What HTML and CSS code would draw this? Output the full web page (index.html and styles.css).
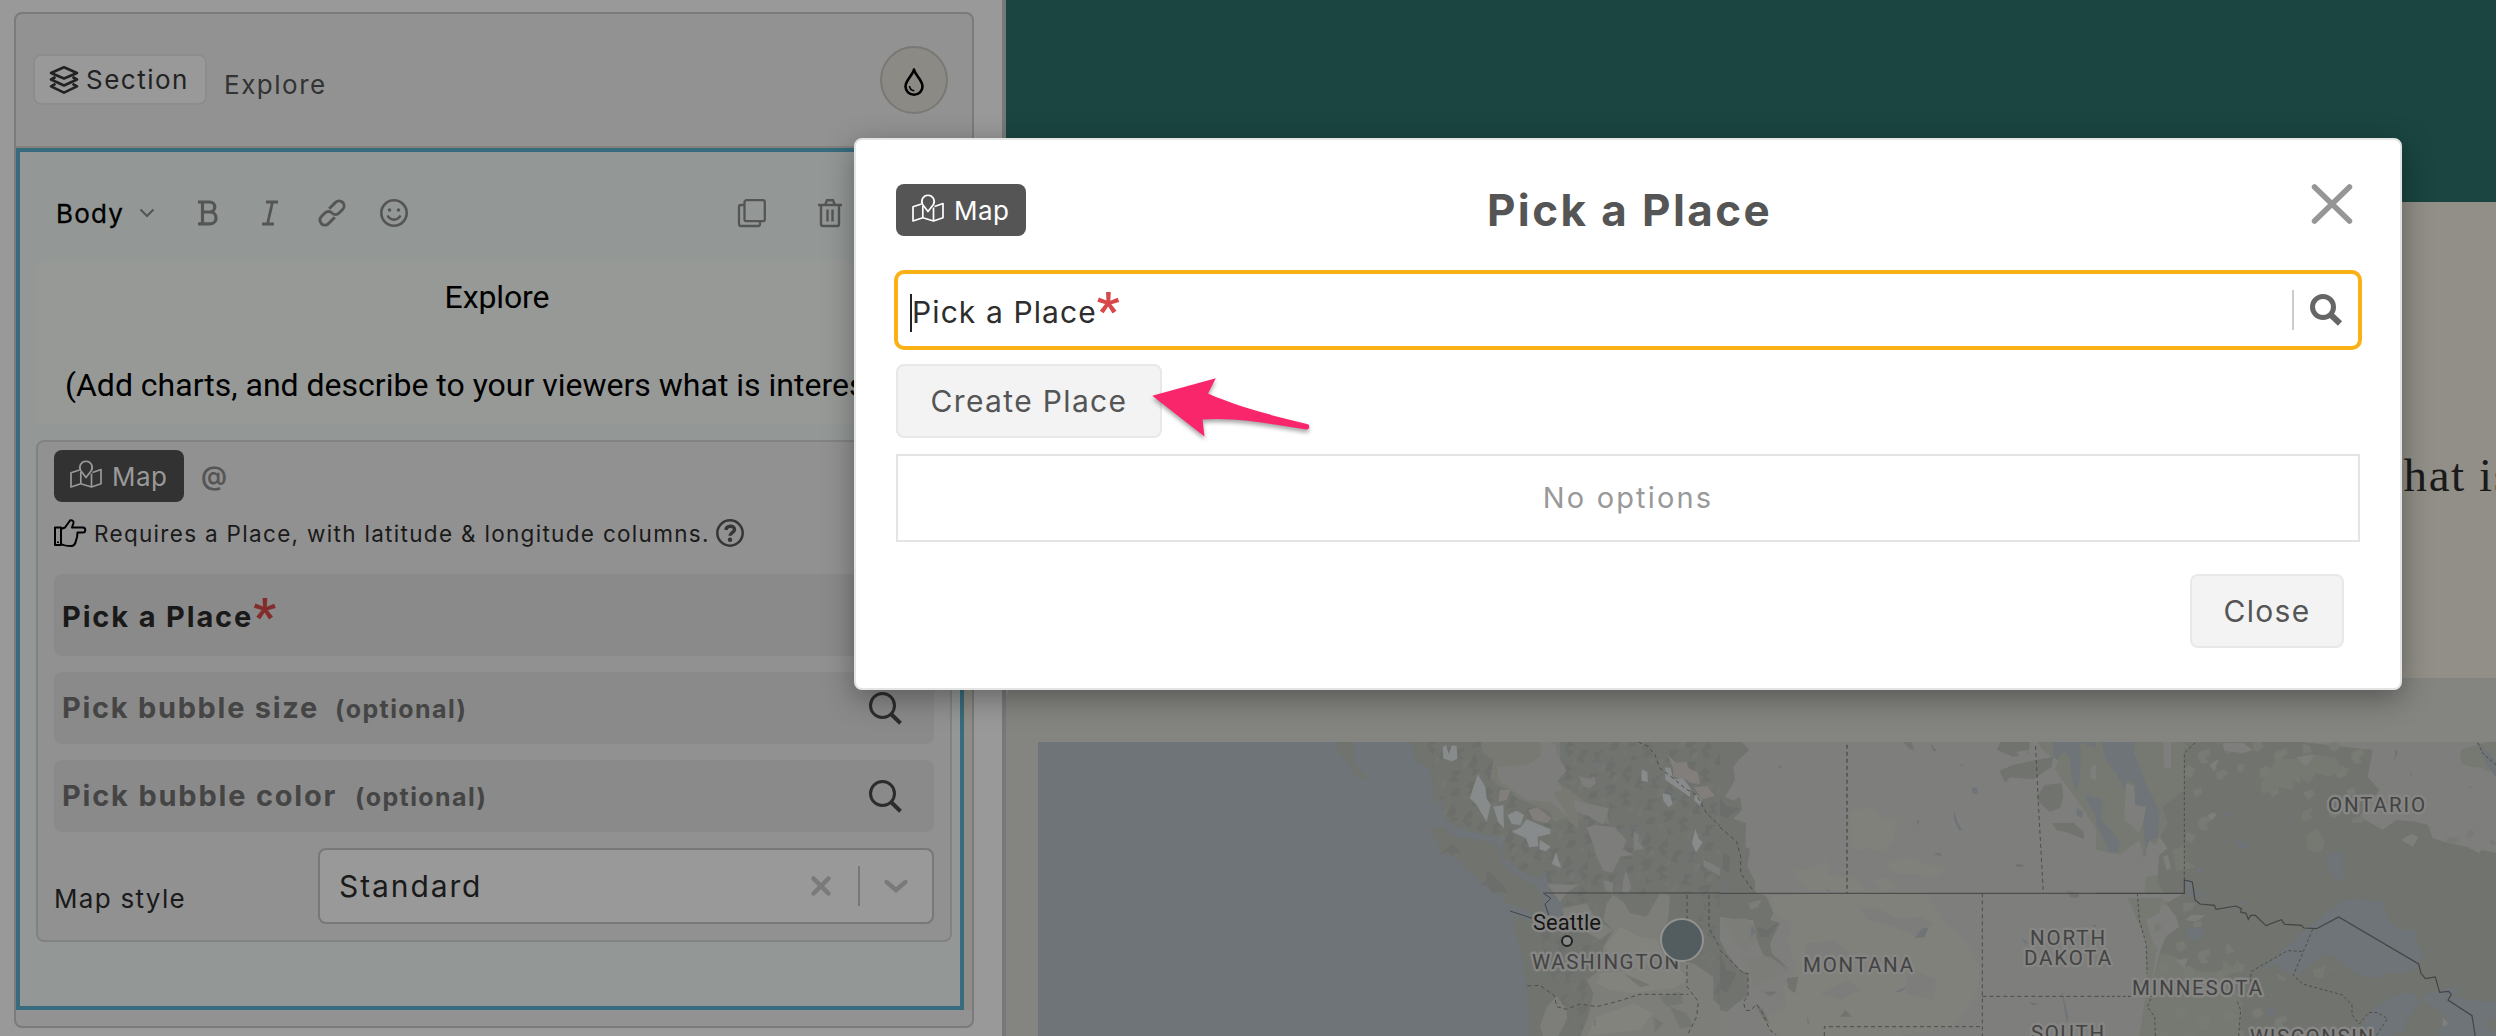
FILE: index.html
```html
<!DOCTYPE html>
<html lang="en">
<head>
<meta charset="utf-8">
<title>Pick a Place</title>
<link rel="stylesheet" href="styles.css">
</head>
<body>
<svg width="0" height="0" class="defs" aria-hidden="true">
  <symbol id="i-map" viewBox="0 0 32 28">
    <g fill="none" stroke="currentColor" stroke-width="1.7" stroke-linejoin="round">
      <path d="M9.500 10 1 12.800V27l9.800-3.300L21.500 27 31 23.800V9.500l-8.500 3"/>
      <path d="M10.800 12v11.700M21.500 13.500V27"/>
      <path d="M16 17.500 10.600 10.500A6.200 6.200 0 1 1 21.400 10.500Z"/>
    </g>
  </symbol>
  <symbol id="i-search" viewBox="0 0 33 33">
    <g fill="none" stroke="currentColor"><ellipse cx="13.500" cy="13.500" rx="12" ry="12" stroke-width="3"/><path d="m22.500 22.500 9 8.700" stroke-width="4"/></g>
  </symbol>
</svg>

<div class="app">
  <main class="editor">
    <section class="section-card">
      <header class="section-head">
        <span class="badge">
          <svg width="28" height="28" viewBox="0 0 28 28" fill="none" stroke="currentColor" stroke-width="2.600" stroke-linejoin="round"><path d="M14 1.300 27 7 14 12.500 1 7Z"/><path d="M5.500 11 1 13.500 14 19.500 27 13.500 22.500 11"/><path d="M5.500 17.800 1 20.400 14 26.600 27 20.400 22.500 17.800"/></svg>
          <span>Section</span>
        </span>
        <span class="section-name">Explore</span>
        <span class="drop">
          <svg width="20" height="28" viewBox="0 0 20 28" fill="none" stroke="#000"><path d="M10 1.500C9 7 1.500 12 1.500 18.500a8.500 8.300 0 0 0 17 0C18.500 12 11 7 10 1.500Z" stroke-width="2.600" stroke-linejoin="round"/><path d="M5.500 18c.3 2.800 2 4.500 4.800 4.700" stroke-width="1.600"/></svg>
        </span>
      </header>
      <div class="block-wrap">
        <div class="block">
          <div class="toolbar">
            <span class="style-name">Body</span>
            <svg class="t-chev" width="16" height="10" viewBox="0 0 16 10" fill="none" stroke="#555" stroke-width="2"><path d="m1.500 1.500 6.500 6.500 6.500-6.500"/></svg>
            <svg class="t-b" width="20" height="26" viewBox="0 0 20 26" fill="none" stroke="#555" stroke-width="3.200"><path d="M0 2h11.500c7 0 7 10 0 10H4M4 12h8c8 0 8 11.800 0 11.800H0M4.500 2v21.500"/></svg>
            <svg class="t-i" width="18" height="26" viewBox="0 0 18 26" fill="none" stroke="#555" stroke-width="2.800"><path d="M5 2h12M1 24h12M11.500 2 6.500 24"/></svg>
            <svg class="t-link" width="26" height="26" viewBox="0 0 26 26" fill="none" stroke="#555" stroke-width="2.900"><g transform="rotate(-45 13 13)"><path d="M14 8.500H23a5 5 0 0 1 5 5 5 5 0 0 1-5 5h-5a5 5 0 0 1-5-5" transform="translate(0 -.5)"/><path d="M12 17.500H3a5 5 0 0 1-5-5 5 5 0 0 1 5-5h5a5 5 0 0 1 5 5" transform="translate(0 .5)"/></g></svg>
            <svg class="t-smile" width="28" height="28" viewBox="0 0 28 28" fill="none" stroke="#555" stroke-width="2.600"><circle cx="14" cy="14" r="12.700"/><path d="M7.500 16.500c3 5.500 10 5.500 13 0"/><circle cx="9.500" cy="11" r="1.800" fill="#555" stroke="none"/><circle cx="18.500" cy="11" r="1.800" fill="#555" stroke="none"/></svg>
            <svg class="t-copy" width="28" height="28" viewBox="0 0 28 28" fill="none" stroke="#555" stroke-width="2.300"><rect x="6.500" y="1.200" width="20.300" height="21" rx="2"/><path d="M6 6H3a2 2 0 0 0-2 2v17a2 2 0 0 0 2 2h17a2 2 0 0 0 2-2v-2.500"/></svg>
            <svg class="t-trash" width="24" height="28" viewBox="0 0 24 28" fill="none" stroke="#555" stroke-width="2.400"><path d="M0 6h24M3 6v19a2 2 0 0 0 2 2h14a2 2 0 0 0 2-2V6M7 6l2-4.800h6L17 6M9.500 10.500v12M14.500 10.500v12"/></svg>
          </div>
          <div class="copy">
            <p class="copy-title">Explore</p>
            <p class="copy-text">(Add charts, and describe to your viewers what is interesting</p>
          </div>
          <div class="chart-card">
            <div class="chart-top">
              <span class="chip chip-dim"><svg width="32" height="28"><use href="#i-map"/></svg><span>Map</span></span>
              <span class="at">@</span>
            </div>
            <div class="hint">
              <svg width="32" height="28" viewBox="0 0 32 28" fill="none" stroke="#000" stroke-width="2" stroke-linejoin="round"><path d="M1 8.500h6V26H1ZM7 10l4-1.500 5-7c1.500-.8 4 0 3.500 2.500L18 8.500h11c3 0 3 5 0 5h-5.500c0 4-.5 6-1.500 8-.5 3-2 5.500-5 5.500-4 0-7-.3-10-2"/><path d="M4 22.500v1.500"/></svg>
              <span class="hint-text">Requires a Place, with latitude &amp; longitude columns.</span>
              <svg width="28" height="28" viewBox="0 0 28 28" fill="none" stroke="#363636"><circle cx="14" cy="14" r="12.700" stroke-width="2.500"/><path d="M10 11c0-5 8.500-5 8.500-.5 0 3.200-4.500 3-4.500 6.300" stroke-width="3.400"/><circle cx="14" cy="20.800" r="2.200" fill="#363636" stroke="none"/></svg>
            </div>
            <div class="pick pick-first"><b>Pick a Place</b><i class="req">*</i></div>
            <div class="pick"><b class="w-size">Pick bubble size</b><small>(optional)</small><svg width="33" height="33"><use href="#i-search"/></svg></div>
            <div class="pick"><b class="w-color">Pick bubble color</b><small>(optional)</small><svg width="33" height="33"><use href="#i-search"/></svg></div>
            <div class="style-row">
              <span class="style-label">Map style</span>
              <span class="select">
                <span class="select-value">Standard</span>
                <svg width="20" height="22" viewBox="0 0 20 22" stroke="#7a7a7a" stroke-width="4.500" stroke-linecap="round"><path d="m2.500 3.500 15 15M17.500 3.500l-15 15"/></svg>
                <span class="select-sep"></span>
                <svg width="24" height="14" viewBox="0 0 24 14" fill="none" stroke="#7a7a7a" stroke-width="4.400" stroke-linecap="round"><path d="m2.500 3 9.500 8 9.500-8"/></svg>
              </span>
            </div>
          </div>
        </div>
      </div>
    </section>
  </main>

  <aside class="preview">
    <div class="hero"></div>
    <div class="story"><p>what is interesting</p></div>
    <div class="map-card">
      <svg class="map" width="1458" height="294" viewBox="1038 742 1458 294">
        <defs>
          <pattern id="ridges" width="190" height="160" patternUnits="userSpaceOnUse" patternTransform="rotate(24)">
            <path fill="#676a67" d="M5 20 30 0 22 30 40 34 12 50 18 34ZM60 10l22 18-6 22 20-4-14 30-8-26-16 6ZM120 4l14 24-20 12 26 2-6 22-24-18 2-20ZM160 30l20-10-8 30 14 10-28 6ZM20 84l28-16-12 28 18 8-32 14 6-18ZM84 92l24-12 4 26-20 22 2-20-16 0ZM140 84l20 8-12 14 24 8-24 20-2-24-18 2ZM46 130l18-10 4 22-22 14ZM110 134l12 8 16-4-20 20Z"/>
            <path fill="#757873" d="M40 44l14-12 4 22-14 14ZM96 52l10 8-8 18-8-10ZM4 120l12-8 4 26-10 8ZM150 60l12 8-10 12ZM80 140l14-8 2 18ZM168 130l16-18-2 30Z"/>
          </pattern>
          <pattern id="patches" width="230" height="200" patternUnits="userSpaceOnUse">
            <path fill="#787a74" d="M10 10l22-6 12 16-18 16-16-8ZM80 36l30-10 4 16-16 10 10 16-22 4-12-20ZM160 12l20 4 8 18-28 8ZM30 90l18-14 20 12-10 22-24 6ZM130 96l26-8 14 14-18 6 2 22-18-6ZM196 70l20 4-6 24-18-6ZM60 150l26-8 2 18-20 12ZM160 158l28-10 10 16-20 16Z"/>
          </pattern>
        </defs>
        <rect x="1038" y="742" width="1458" height="294" fill="#6e7477"/>

        <!-- Pacific coast -->
        <g transform="translate(1320 740) scale(.33333)">
          <path fill="#70736e" d="M272 0 285 60 330 95 342 185 350 195 362 170 372 232 400 258 440 272 520 290 565 285 545 330 556 360 600 390 650 415 675 400 685 445 700 472 725 485 735 530 690 560 580 530 585 580 600 620 612 690 622 760 628 888H1204V0Z"/>
          <path fill="url(#ridges)" opacity=".6" d="M300 0 345 90 372 232 520 290 600 390 675 400 700 472 1204 460V0Z"/>
          <path fill="url(#ridges)" opacity=".4" d="M690 560 640 600 700 720 760 888H800L840 700 830 470H735ZM1120 460H1204V888H1100Z"/>
          <path fill="#70736e" d="M325 268 365 260 410 290 470 300 530 312 548 372 600 410 650 440 672 480 665 510 640 522 600 505 550 482 548 460 520 462 480 420 430 375 390 345 365 340 352 305ZM45 0h58v50l-4 26 26 18 20 22-30-4-26-36-32-38Z"/>
          <path fill="#6b6e6b" d="m400 312-30 20-8 12 18-10 20 14 4-14 20 8ZM500 390l24 20 28 30 10 18-20-4-22 6-18-24-20-2 16-12Z"/>
          <path fill="#787973" d="M480 0H720V60L735 100 712 125 750 150 800 190 862 205 868 255 820 230 775 215V270L740 235 700 245 690 215 640 195 590 175 570 150 540 140 510 115 520 60 490 40Z"/>
          <path fill="#7d7d7b" d="M530 80 620 75 660 50 665 0 705 10 715 50 740 92 712 122 728 148 700 160 750 235 690 185 620 180 540 125ZM775 108 810 116 822 108 828 130 808 146 790 138ZM760 180 800 190 866 205 850 255 805 228 770 215ZM800 262 830 255 885 262 920 300 908 328 942 345 900 350 878 398 850 392 830 350 818 310ZM942 275 958 285 954 302 972 326 940 332ZM680 432 778 434 740 458 720 486 700 458ZM850 420 880 428 878 465 856 450ZM915 380 934 440 925 460 905 455ZM1150 358 1200 385 1200 408 1150 380Z"/>
          <path fill="#7d7e79" d="M880 465 910 485 930 520 980 530 1020 460 1050 465 1045 530 1030 590 1040 650 1120 670 1180 710 1180 780 1204 800V888H780L805 830 820 760 800 720 840 690 850 620 880 570 850 540 860 490ZM728 505 800 490 830 540 880 570 840 600 770 560 730 530ZM680 800 710 768 740 810 742 835 715 888H670L660 860Z"/>
          <path fill="#83837d" d="M900 560 960 590 1010 600 1030 640 960 690 880 660 855 620ZM840 700 960 690 1080 690 1110 720 1060 745 930 760 870 750 830 730ZM830 830 940 790 1000 820 960 870 800 888Z"/>
          <path fill="#747771" d="M1020 770 1080 755 1090 790 1040 800ZM1050 800 1100 820 1120 860 1080 865ZM1000 830 1030 850 1005 878ZM910 700 990 735 960 742Z"/>
          <path fill="#888b8b" d="M368 22 378 14 386 42 396 16 410 18 412 56 396 64 370 56ZM474 104 496 140 500 175 512 195 500 245 486 222 470 195 450 175 460 140ZM520 200 550 195 552 265 534 245ZM562 225 590 212 612 225 602 255 575 252ZM575 275 602 262 620 238 660 255 692 268 690 282 652 290 655 318 628 322 618 295ZM660 300 692 320 678 334 658 328ZM708 336 716 362 724 384 696 372ZM1028 160 1050 165 1058 192 1046 202 1030 182ZM965 88 982 96 984 126 964 122ZM1035 82 1052 84 1060 118 1088 114 1112 145 1110 172 1080 150 1036 120ZM1126 266 1136 296 1148 306 1128 338 1116 310ZM1126 160 1145 178 1140 198 1122 180Z"/>
          <path fill="#817e7b" d="M1042 44 1070 68 1100 66 1106 84 1134 98 1140 132 1112 130 1096 118 1060 110 1058 80ZM1122 142 1162 138 1184 168 1146 178ZM540 150 572 148 560 180 535 185ZM625 210 652 202 695 235 680 250 640 240Z"/>
          <g fill="none" stroke="#6e7477" stroke-width="4"><path d="M820 75 850 72 880 60M1000 110 1040 150 1085 175M890 275 950 262 970 240M1110 330 1112 400 1120 430M720 15 732 60M760 380 780 415M920 380 910 410M826 840 824 856"/></g>
          <g fill="none" stroke="#444" stroke-width="3"><path d="M670 459H1204M570 513 640 536M670 460 693 475 675 492 686 524"/></g>
          <g fill="none" stroke="#4c4d4b" stroke-width="3" stroke-dasharray="12 9"><path d="M955 6 985 20 1005 45 1020 85 1060 115 1095 145 1130 165 1160 220 1204 262M1101 465V740L1135 785 1130 830 1104 882M1167 465V565L1204 630M622 738 660 736 704 768 710 800 740 808 780 792 830 800 890 785 960 763H1105"/></g>
        </g>

        <!-- Prairies -->
        <g transform="translate(1720 740) scale(.33333)">
          <path fill="#7e7e7c" d="M0 0H1202V888H0Z"/>
          <path fill="#80817b" d="M160 470 250 462H620L665 540 700 570 740 610 780 680 770 760 700 860 540 888H180L120 840 200 800 190 740 230 690 205 600 215 550 160 520ZM390 215 450 200 490 240 530 240 520 300 495 335 440 325 400 335ZM495 375 560 348 620 372 680 385 655 412 580 400 530 405ZM225 390 280 385 320 355 325 405 400 412 440 455H280L235 430ZM460 420 500 410 530 440 490 456Z"/>
          <path fill="#7d7e7b" d="M420 500 470 505 530 535 600 530 640 552 590 590 520 560 440 540ZM260 610 340 600 390 640 330 700 250 690ZM560 680 650 720 640 780 560 760ZM380 720 420 750 360 780 300 760Z"/>
          <path fill="#70736e" d="M0 0H60L88 30 60 55 40 80 45 120 15 170 40 182 60 170 66 210 40 236 78 250 76 320 90 328 82 380 105 425 104 455 140 470 160 520 150 540 180 548 150 610 155 640 205 685 160 665 130 645 110 600 100 540 60 540 0 530Z"/>
          <path fill="#70736e" d="M0 600 20 640 60 690 85 700 80 770 50 790 20 815 0 810ZM120 690 145 700 130 725 112 720ZM130 755 175 755 150 768ZM200 715 235 710 225 760 205 745ZM105 790 130 810 150 852 130 838ZM360 830 376 810 396 830ZM550 6H575L582 30 568 26ZM632 10 650 32 640 34Z"/>
          <path fill="#6a6d6a" d="M0 170 20 200 60 205 20 235 0 225ZM10 340 30 350 26 400 8 385ZM110 560 140 570 176 548 145 590 120 590ZM0 640 20 690 50 700 20 760 0 745Z"/>
          <path fill="#7c7d79" d="M85 490 125 478 115 500 92 510ZM10 540 80 535 105 570 110 600 80 640 50 610ZM60 650 150 650 205 690 150 720 100 740 90 690Z"/>
          <path fill="#70736e" d="M842 6H930L925 42 880 50 830 30ZM838 92 880 75 950 60 1000 50 995 80 940 118 870 112 856 128ZM950 170 975 135 1025 130 1030 170 1020 205 990 215 960 190ZM995 250 1060 248 1090 275 1092 298 1050 280 1010 270ZM885 372 912 374 908 382 890 380ZM1038 454 1078 458 1074 474 1050 470Z"/>
          <path fill="#767972" d="M950 0H1204V345L1170 340 1145 320 1130 270 1095 215 1060 165 1030 125 1005 90 1015 60 980 40 960 20Z"/>
          <path fill="#6e7477" d="M1000 6H1204V150L1180 110 1150 60 1125 22 1080 8 1082 60 1078 120 1070 155 1056 120 1050 50 1030 35 1010 60 1000 40ZM1095 165 1142 178 1145 225 1165 262 1190 275 1200 330 1170 335 1140 280 1135 240 1110 200ZM1070 205 1090 215 1086 235 1070 225ZM755 145 770 142 774 158 760 162ZM702 210 712 245 728 272 716 270 702 240ZM590 242 592 255 584 272 600 240ZM640 342 660 338 666 350ZM175 75 186 80 178 86ZM720 72 729 74 726 82ZM605 566 626 562 614 592 584 594ZM96 555 106 575 92 594ZM520 758 562 738 545 754ZM262 826 268 852 262 850ZM925 786 960 792 940 796ZM1024 748 1030 768 1045 830 1040 850 1034 810ZM905 594 918 604 926 612 914 608ZM315 446 340 456 322 452ZM1116 552 1134 558 1124 562ZM5 400 25 450 20 470 8 420Z"/>
          <path fill="#7e7e7c" d="M1112 80 1130 72 1152 105 1140 124 1112 115ZM888 36 925 30 918 50 900 48Z"/>
          <path fill="none" stroke="#444" stroke-width="3" d="M0 460H1204"/>
          <g fill="none" stroke="#4c4d4b" stroke-width="3" stroke-dasharray="12 9"><path stroke-width="4" d="M381 14V460"/><path d="M947 18 955 190 970 460M787 460V888M787 769H1204M313 888V860H787M0 262 50 305 62 350V400L104 458M0 630 70 700H84V770L70 785 76 810 90 812 110 793 125 815 150 870 168 884"/></g>
        </g>

        <!-- Great Lakes -->
        <g transform="translate(2096 740) scale(.33333)">
          <path fill="#7e7e7c" d="M0 0H1204V888H0Z"/>
          <path fill="#767972" d="M0 0H300V420L190 460H145L150 410 180 390 190 330 160 300 145 350 130 300 70 345 0 330ZM95 475H200L190 520 150 540 180 640 170 710 200 760 160 888H130L150 760 150 600ZM190 640 300 630 480 690 500 760 560 800 540 888H160L190 790 170 720Z"/>
          <path fill="#70736e" d="M265 0H560L830 30 815 110 850 150 820 190 790 230 860 270 900 240 960 245 995 255 1010 295 1060 310 1204 340V888H430L440 790 380 700 280 690 240 650 190 640 210 590 250 560 240 530 210 490 265 460H205L185 430 190 300 215 250 200 200 265 150Z"/>
          <path fill="url(#patches)" d="M266 0H830L815 110 840 180 800 250 640 240 500 170 420 110 360 120 320 220 380 260 330 330 270 300Z"/>
          <path fill="url(#patches)" d="M190 480 300 490 420 640 560 800 620 888H190L240 800 150 700ZM1010 220 1080 230 1204 310V345L1060 310 1000 290Z"/>
          <path fill="#767972" d="M230 330 270 310 265 360 300 380 240 395ZM630 290 660 264 686 300 680 330 655 340 635 325ZM630 210 655 200 630 245 612 235ZM540 60 600 55 640 40 680 48 720 55 740 90 700 110 660 100 640 130 600 110 590 150 540 140 500 165 495 130ZM650 690 690 675 680 715 655 710ZM540 700 570 712 565 726 545 715ZM1090 30 1204 0V110L1150 80 1100 90ZM380 660 410 680 430 655 425 700 380 700Z"/>
          <path fill="#7e7e7c" d="M840 0H1100L1090 70 1160 90 1204 100V230L1140 240 1090 270 1010 290 1000 230 960 245 930 230 890 245 860 150 845 90ZM915 300 945 282 968 290 950 320ZM1120 290 1150 278 1175 300 1150 340 1120 325ZM200 350 215 345 225 385 212 390ZM335 225 352 216 362 225 345 242ZM380 10 440 8 470 30 440 40 385 32ZM340 75 370 55 355 95ZM600 50 655 46 630 80ZM0 330 70 345 145 340 180 310 190 290 215 325 190 345 185 405 145 412 140 455H0ZM90 130 125 140 135 180 158 170 145 235 130 280 110 260 85 240ZM285 525 330 525 300 545 270 540ZM240 660 275 655 265 685ZM704 690 714 645 724 655 732 690ZM1040 832 1058 850 1056 872 1040 860ZM200 0H225V85H205Z"/>
          <path fill="#6e7477" d="M15 0H118L112 35 150 135 190 210 186 290 162 300 148 325 142 250 150 200 118 195 115 130 95 120 85 150 60 100 30 60ZM0 170 18 180 15 240 45 270 72 310 65 335 40 335 15 280 0 250ZM146 326 150 345 140 352ZM270 420 290 425 298 465 330 440 305 478 275 460ZM275 568 310 560 330 580 300 605 270 590ZM705 335 740 332 742 415 720 418 690 375ZM402 285 430 300 462 320 436 328ZM570 235 595 234 588 242ZM385 218 402 220 396 230 385 228ZM415 490 440 482 450 492 430 500ZM300 388 324 384 318 410ZM495 475 508 476 504 484ZM1145 6 1160 20 1204 70V118L1170 70ZM898 28 906 35 895 62ZM942 92 950 108 944 106ZM1110 146 1136 134 1125 142Z"/>
          <path fill="#6e7477" d="M490 690 530 660 600 590 660 545 700 510 745 480 780 478 860 486 880 545 910 570 965 570 960 610 985 640 968 680 930 700 870 700 840 714 800 712 770 690 740 675 700 650 680 640 640 680 600 708 560 690 550 670 500 690ZM810 835 850 790 920 758 960 765 972 790 930 840 925 870 890 888H790ZM985 765 1060 740 1130 750 1204 765V830L1165 850 1204 888H1000L1060 850 1020 800 985 790ZM525 800 540 810 530 840 515 825Z"/>
          <path fill="#70736e" d="M1070 770 1190 790 1204 760V740L1100 740ZM960 810 1000 830 1030 888H930ZM705 648 724 646 732 690 704 688Z"/>
          <path fill="none" stroke="#444" stroke-width="3.500" d="M0 460H265V420L289 426 297 480 312 492 355 496 360 508 420 498 436 506 434 516 450 520 457 538 464 526H478L510 557 556 539 566 553 616 556 624 564 662 566 728 531 968 672 975 700 988 716 1018 711 1031 757 1058 754 1066 764 1056 780 1128 827 1138 890"/>
          <g fill="none" stroke="#4c4d4b" stroke-width="3" stroke-dasharray="9 7"><path d="M265 420V40L298 8M124 460 130 540 150 610 154 700M0 769H168L154 800 176 830 178 888M650 568 592 706 620 732 740 765 768 795 768 825 790 852 818 817 845 818 875 836 840 888M618 634 575 632 466 694 462 730M424 785 434 810 428 888M1145 8 1160 40 1204 78"/></g>
        </g>

        <g class="state">
          <text x="1532" y="969" textLength="147">WASHINGTON</text>
          <text x="1803" y="972" textLength="110">MONTANA</text>
          <text x="2030" y="945" textLength="75">NORTH</text>
          <text x="2024" y="965" textLength="87">DAKOTA</text>
          <text x="2031" y="1040" textLength="73">SOUTH</text>
          <text x="2132" y="995" textLength="130">MINNESOTA</text>
          <text x="2250" y="1044" textLength="123">WISCONSIN</text>
          <text x="2328" y="812" textLength="97">ONTARIO</text>
        </g>
        <text class="city" x="1533" y="930" textLength="68">Seattle</text>
        <circle cx="1567" cy="941" r="5" fill="#8a8a8a" stroke="#222" stroke-width="2"/>
        <circle cx="1682" cy="940" r="21" fill="#535c5f" stroke="#929292" stroke-width="2"/>
      </svg>
    </div>
  </aside>
</div>

<div class="modal" role="dialog">
  <div class="modal-head">
    <span class="chip"><svg width="32" height="28"><use href="#i-map"/></svg><span>Map</span></span>
    <h1>Pick a Place</h1>
    <svg class="modal-x" width="42" height="40" viewBox="0 0 42 40" stroke="#969696" stroke-width="5.500" stroke-linecap="round"><path d="m3.500 3 35 34M38.500 3l-35 34"/></svg>
  </div>
  <div class="field">
    <span class="caret"></span><span class="field-text">Pick a Place</span><i class="req">*</i>
    <span class="field-sep"></span>
    <svg width="32" height="32" viewBox="0 0 32 32" fill="none" stroke="#666"><circle cx="13" cy="13" r="10.500" stroke-width="5"/><path d="m21 21 9 8.500" stroke-width="6"/></svg>
  </div>
  <button class="btn create"><span>Create Place</span></button>
  <div class="empty"><span>No options</span></div>
  <div class="foot"><button class="btn close"><span>Close</span></button></div>
  <svg class="arrow" width="180" height="80" viewBox="1140 370 180 80"><path fill="#f9266c" d="M1152.300 395.800 1215.800 378.200 1208 393.500C1236 406 1270 415 1307 424A2.600 2.600 0 0 1 1306 429.500C1270 424 1235 417 1202.500 419.500L1204.500 436.500Z"/></svg>
</div>
</body>
</html>
```
FILE: styles.css
```css
* { box-sizing: border-box; }
body {
  margin: 0;
  width: 2496px;
  height: 1036px;
  overflow: hidden;
  position: relative;
  background: #999;
  font-family: Inter, "Open Sans", sans-serif;
  color: #1a1a1a;
}
p, h1 { margin: 0; }
svg { display: block; flex: none; overflow: visible; }
i { font-style: normal; }
.defs { position: absolute; }
.app { display: flex; height: 1036px; }

/* Editor pane */
.editor { width: 1006px; flex: none; padding: 12px 0 0 14px; border-right: 4px solid #787878; }
.section-card { width: 960px; height: 1016px; border: 2px solid #7b7b7b; border-radius: 8px; background: #929292; }
.section-head { height: 134px; display: flex; align-items: flex-start; padding: 32px 24px 0 17px; border-bottom: 2px solid #85827d; }
.badge {
  display: flex; align-items: center; gap: 8px;
  width: 174px; height: 51px; margin-top: 8px; padding-left: 15px;
  background: #999; border: 2px solid #8d8d8d; border-radius: 8px;
  font-size: 26px; letter-spacing: 1.500px; color: #222;
}
.section-name { margin: 23px 0 0 17px; font-size: 26px; line-height: 32px; letter-spacing: 1.500px; color: #333; }
.drop {
  display: flex; align-items: center; justify-content: center;
  width: 68px; height: 68px; margin-left: auto;
  border: 2px solid #7b7774; border-radius: 50%; background: #8b8a84;
}
.drop svg { margin-top: 4px; }
.block-wrap { background: #8f8d85; height: 862px; }
.block { width: 948px; height: 862px; border: 4px solid #376b7d; background: #939896; }
.toolbar { display: flex; align-items: center; height: 108px; padding: 14px 0 0 36px; }
.style-name { width: 83px; font-size: 26px; font-weight: 400; letter-spacing: 1.200px; color: #000; -webkit-text-stroke: .3px #000; }
.t-b { margin-left: 43px; }
.t-i { margin-left: 43px; }
.t-link { margin-left: 40px; }
.t-smile { margin-left: 35px; }
.t-copy { margin-left: 330px; }
.t-trash { margin-left: 52px; }
.copy { height: 165px; margin: 0 8px 0 16px; padding-top: 18px; background: #979997; border-radius: 8px; font-family: Roboto, sans-serif; font-size: 32px; color: #000; overflow: hidden; }
.copy-title { width: 922px; text-align: center; line-height: 38px; letter-spacing: -.1px; }
.copy-text { padding: 50px 0 0 29px; line-height: 38px; white-space: nowrap; }
.chart-card { margin: 15px 8px 0 16px; height: 502px; padding: 8px 16px; border: 2px solid #828282; border-radius: 8px; background: #919191; }
.chart-top { display: flex; align-items: center; }
.chip {
  display: flex; align-items: center; gap: 10px;
  width: 130px; height: 52px; padding-left: 16px; border-radius: 8px;
  background: #555; color: #fff; font-size: 26px; letter-spacing: .5px;
}
.chip svg { margin-top: -4px; }
.chip-dim { background: #323232; color: #999; }
.at { margin-left: 17px; font-size: 26px; line-height: 30px; color: #555; font-weight: 600; }
.hint { display: flex; align-items: center; height: 28px; margin-top: 17px; }
.hint-text { width: 622px; margin-left: 8px; font-size: 22.500px; letter-spacing: 1.310px; white-space: nowrap; }
.pick { display: flex; align-items: center; height: 72px; margin-top: 16px; padding: 0 32px 2px 8px; border-radius: 8px; background: #8a8a8a; color: #454545; }
.pick b { font-size: 29px; font-weight: 700; letter-spacing: 1.850px; white-space: nowrap; }
.pick small { font-size: 25px; font-weight: 700; letter-spacing: 1.400px; padding-top: 3px; }
.pick svg { margin: 2px 0 0 auto; color: #2c2c2c; }
.pick-first { height: 82px; margin-top: 27px; color: #191919; padding-top: 4px; }
.pick b.w-size { width: 273px; letter-spacing: 1.700px; }
.pick b.w-color { width: 293px; letter-spacing: 1.800px; }
.req { font: 700 50px/40px Roboto, sans-serif; color: #d94848; padding-top: 2px; }
.pick .req { color: #832c2c; }
.style-row { display: flex; margin-top: 16px; }
.style-label { width: 264px; padding: 36px 0 0 0; font-size: 26px; line-height: 30px; letter-spacing: 1.300px; }
.select { display: flex; align-items: center; width: 616px; height: 76px; padding: 0 24px 0 19px; border: 2px solid #787878; border-radius: 8px; background: #999; }
.select-value { flex: 1; font-size: 30px; letter-spacing: 1.900px; padding-bottom: 1px; }
.select-sep { width: 2px; height: 40px; margin: 0 24px 0 27px; background: #787878; }

/* Preview pane */
.preview { width: 1490px; flex: none; overflow: hidden; background: #918f87; }
.hero { height: 202px; background: #1a4540; }
.story { height: 476px; padding: 246px 0 0 1362px; font: 47px/54px "Liberation Serif", serif; letter-spacing: 1.600px; white-space: nowrap; }
.map-card { height: 358px; padding: 64px 0 0 32px; border-radius: 24px 0 0 0; background: #848481; }
.map { overflow: hidden; }
.map text { font-family: Roboto, sans-serif; paint-order: stroke; stroke: #868684; stroke-width: 5px; stroke-linejoin: round; }
.state { font-size: 20.500px; fill: #434343; }
.city { font-size: 22px; fill: #151515; }

/* Dialog */
.modal {
  position: absolute; left: 854px; top: 138px; width: 1548px; height: 552px;
  padding: 40px; background: #fff; border: 2px solid #e4e4e4; border-radius: 8px;
  box-shadow: 0 8px 30px rgba(0,0,0,.35);
}
.modal-head { display: grid; grid-template-columns: 1fr auto 1fr; align-items: start; height: 90px; padding-top: 4px; }
.modal-head h1 { font-size: 44px; line-height: 52px; font-weight: 700; color: #555; letter-spacing: 2.400px; padding-left: 3px; }
.modal-x { justify-self: end; margin-right: 7px; }
.field { display: flex; align-items: center; width: 1468px; height: 80px; margin-left: -2px; padding: 0 16px 0 12px; border: 4px solid #f9b115; border-radius: 10px; }
.caret { width: 2px; height: 38px; margin-top: 6px; background: #222; }
.field-text { font-size: 30px; letter-spacing: 1.100px; color: #2d2d2d; margin-top: 4px; white-space: nowrap; }
.field-sep { width: 2px; height: 40px; margin: 0 16px 0 auto; background: #ccc; }
.btn { display: flex; align-items: center; justify-content: center; height: 74px; padding: 0; border: 2px solid #e8e8e8; border-radius: 8px; background: #f3f3f3; font: 30px Inter, sans-serif; letter-spacing: 1.350px; color: #555; }
.create { width: 266px; margin-top: 14px; }
.close { width: 154px; }
.empty { display: flex; align-items: center; justify-content: center; height: 88px; margin-top: 16px; padding-bottom: 2px; border: 2px solid #e4e4e4; font-size: 29px; letter-spacing: 2.150px; color: #999; }
.foot { display: flex; justify-content: flex-end; padding: 32px 16px 0 0; }
.arrow { position: absolute; left: 284px; top: 230px; filter: drop-shadow(0 3px 2px rgba(0,0,0,.35)); }
```
